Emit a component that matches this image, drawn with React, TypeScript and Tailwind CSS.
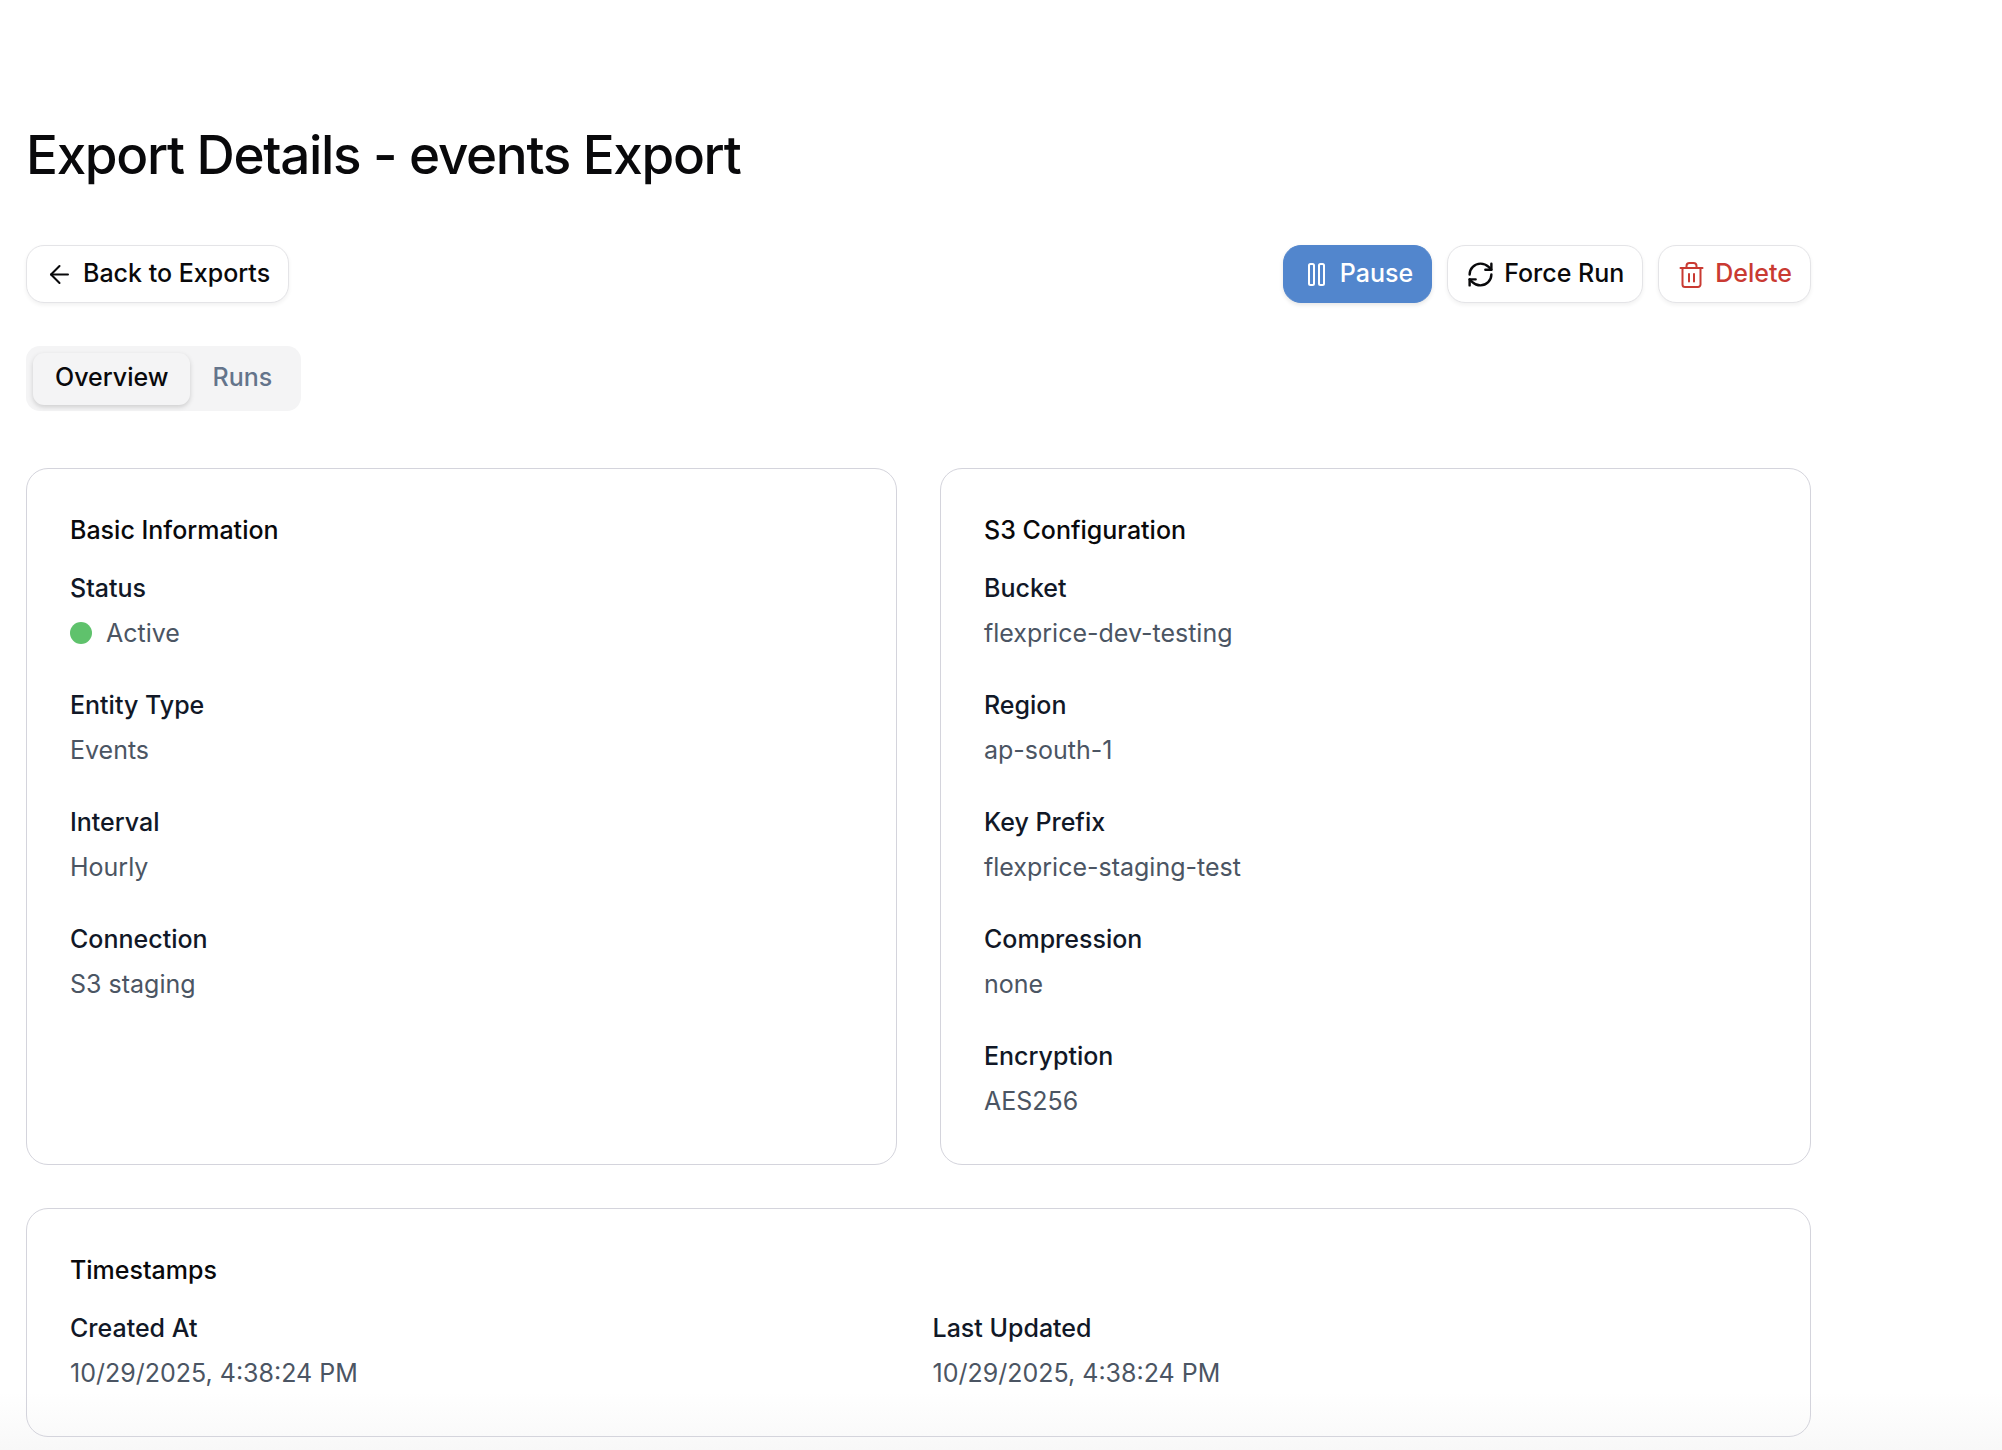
import React from 'react';
import { ArrowLeft, RefreshCw } from 'lucide-react';

const buttonBase =
  'flex h-[58px] items-center rounded-[18px] border px-[18px] text-[25px] leading-9 font-medium gap-[9px]';
const outline = 'border-[#e4e4e7] bg-white shadow-[0_2px_4px_rgba(0,0,0,0.06)]';

function PauseIcon() {
  return (
    <svg className="size-[29px]" viewBox="0 0 29 29" fill="none" stroke="currentColor" strokeWidth="2" aria-hidden="true">
      <rect x="7" y="4" width="5" height="21" rx="1.500" />
      <rect x="17" y="4" width="5" height="21" rx="1.500" />
    </svg>
  );
}

function TrashIcon() {
  return (
    <svg className="size-[29px]" viewBox="0 0 29 29" fill="none" stroke="currentColor" strokeWidth="2" strokeLinecap="round" strokeLinejoin="round" aria-hidden="true">
      <path d="M3.500 8h22" />
      <path d="M5.500 8v16.500a2.500 2.500 0 0 0 2.500 2.500h13a2.500 2.500 0 0 0 2.500-2.500V8" />
      <path d="M9.500 8V6a3 3 0 0 1 3-3h4a3 3 0 0 1 3 3v2" />
      <path d="M12 14v7.500M17 14v7.500" />
    </svg>
  );
}

function Label({ children }: { children: React.ReactNode }) {
  return <span className="pb-0.5">{children}</span>;
}

function Field({ label, value, active }: { label: string; value: string; active?: boolean }) {
  return (
    <div>
      <dt className="leading-9 font-medium text-[#111827]">{label}</dt>
      <dd className="mt-[9px] flex items-center leading-9 text-[#4b5563]">
        {active && <span className="mr-[14px] size-[22px] rounded-full bg-[#5fc26c]" />}
        {value}
      </dd>
    </div>
  );
}

function Card({ title, children }: { title: string; children: React.ReactNode }) {
  return (
    <section className="rounded-[22px] border border-[#d4d4dc] px-[43px] pt-[43px] pb-[45px]">
      <h2 className="mb-[22px] leading-9 font-medium text-[#09090b]">{title}</h2>
      {children}
    </section>
  );
}

export default function App() {
  return (
    <main className="min-h-screen bg-linear-to-b from-white from-96% to-[#f8f8f8] pt-[119px] pr-[191px] pb-3 pl-[26px] font-['Inter',sans-serif] text-[25px] text-[#09090b]">
      <h1 className="text-[53px] leading-[72px] font-medium tracking-tight">Export Details - events Export</h1>
      <div className="mt-[54px] flex items-center justify-between">
        <button type="button" className={`${buttonBase} ${outline}`}>
          <ArrowLeft className="size-[29px]" strokeWidth={1.7} />
          <Label>Back to Exports</Label>
        </button>
        <div className="flex gap-[15px]">
          <button type="button" className={`${buttonBase} border-[#5286cd] bg-[#5286cd] text-white shadow-[0_2px_4px_rgba(0,0,0,0.1)]`}>
            <PauseIcon />
            <Label>Pause</Label>
          </button>
          <button type="button" className={`${buttonBase} ${outline}`}>
            <RefreshCw className="size-[29px]" strokeWidth={2} />
            <Label>Force Run</Label>
          </button>
          <button type="button" className={`${buttonBase} ${outline} text-[#c93a32]`}>
            <TrashIcon />
            <Label>Delete</Label>
          </button>
        </div>
      </div>
      <div role="tablist" className="mt-[43px] flex h-[65px] w-fit items-center rounded-[14px] bg-[#f4f4f5] px-[7px] font-medium">
        <button type="button" role="tab" aria-selected="true" className="flex h-[52px] items-center rounded-[11px] bg-[#f4f4f5] px-[22px] shadow-[0_2px_5px_rgba(0,0,0,0.16)]">
          <Label>Overview</Label>
        </button>
        <button type="button" role="tab" aria-selected="false" className="flex h-[52px] items-center px-[22px] text-[#64748b]">
          <Label>Runs</Label>
        </button>
      </div>
      <div className="mt-[57px] grid grid-cols-2 gap-[43px]">
        <Card title="Basic Information">
          <dl className="flex flex-col gap-9">
            <Field label="Status" value="Active" active />
            <Field label="Entity Type" value="Events" />
            <Field label="Interval" value="Hourly" />
            <Field label="Connection" value="S3 staging" />
          </dl>
        </Card>
        <Card title="S3 Configuration">
          <dl className="flex flex-col gap-9">
            <Field label="Bucket" value="flexprice-dev-testing" />
            <Field label="Region" value="ap-south-1" />
            <Field label="Key Prefix" value="flexprice-staging-test" />
            <Field label="Compression" value="none" />
            <Field label="Encryption" value="AES256" />
          </dl>
        </Card>
      </div>
      <div className="mt-[43px]">
        <Card title="Timestamps">
          <dl className="grid grid-cols-2 gap-7">
            <Field label="Created At" value="10/29/2025, 4:38:24 PM" />
            <Field label="Last Updated" value="10/29/2025, 4:38:24 PM" />
          </dl>
        </Card>
      </div>
    </main>
  );
}
